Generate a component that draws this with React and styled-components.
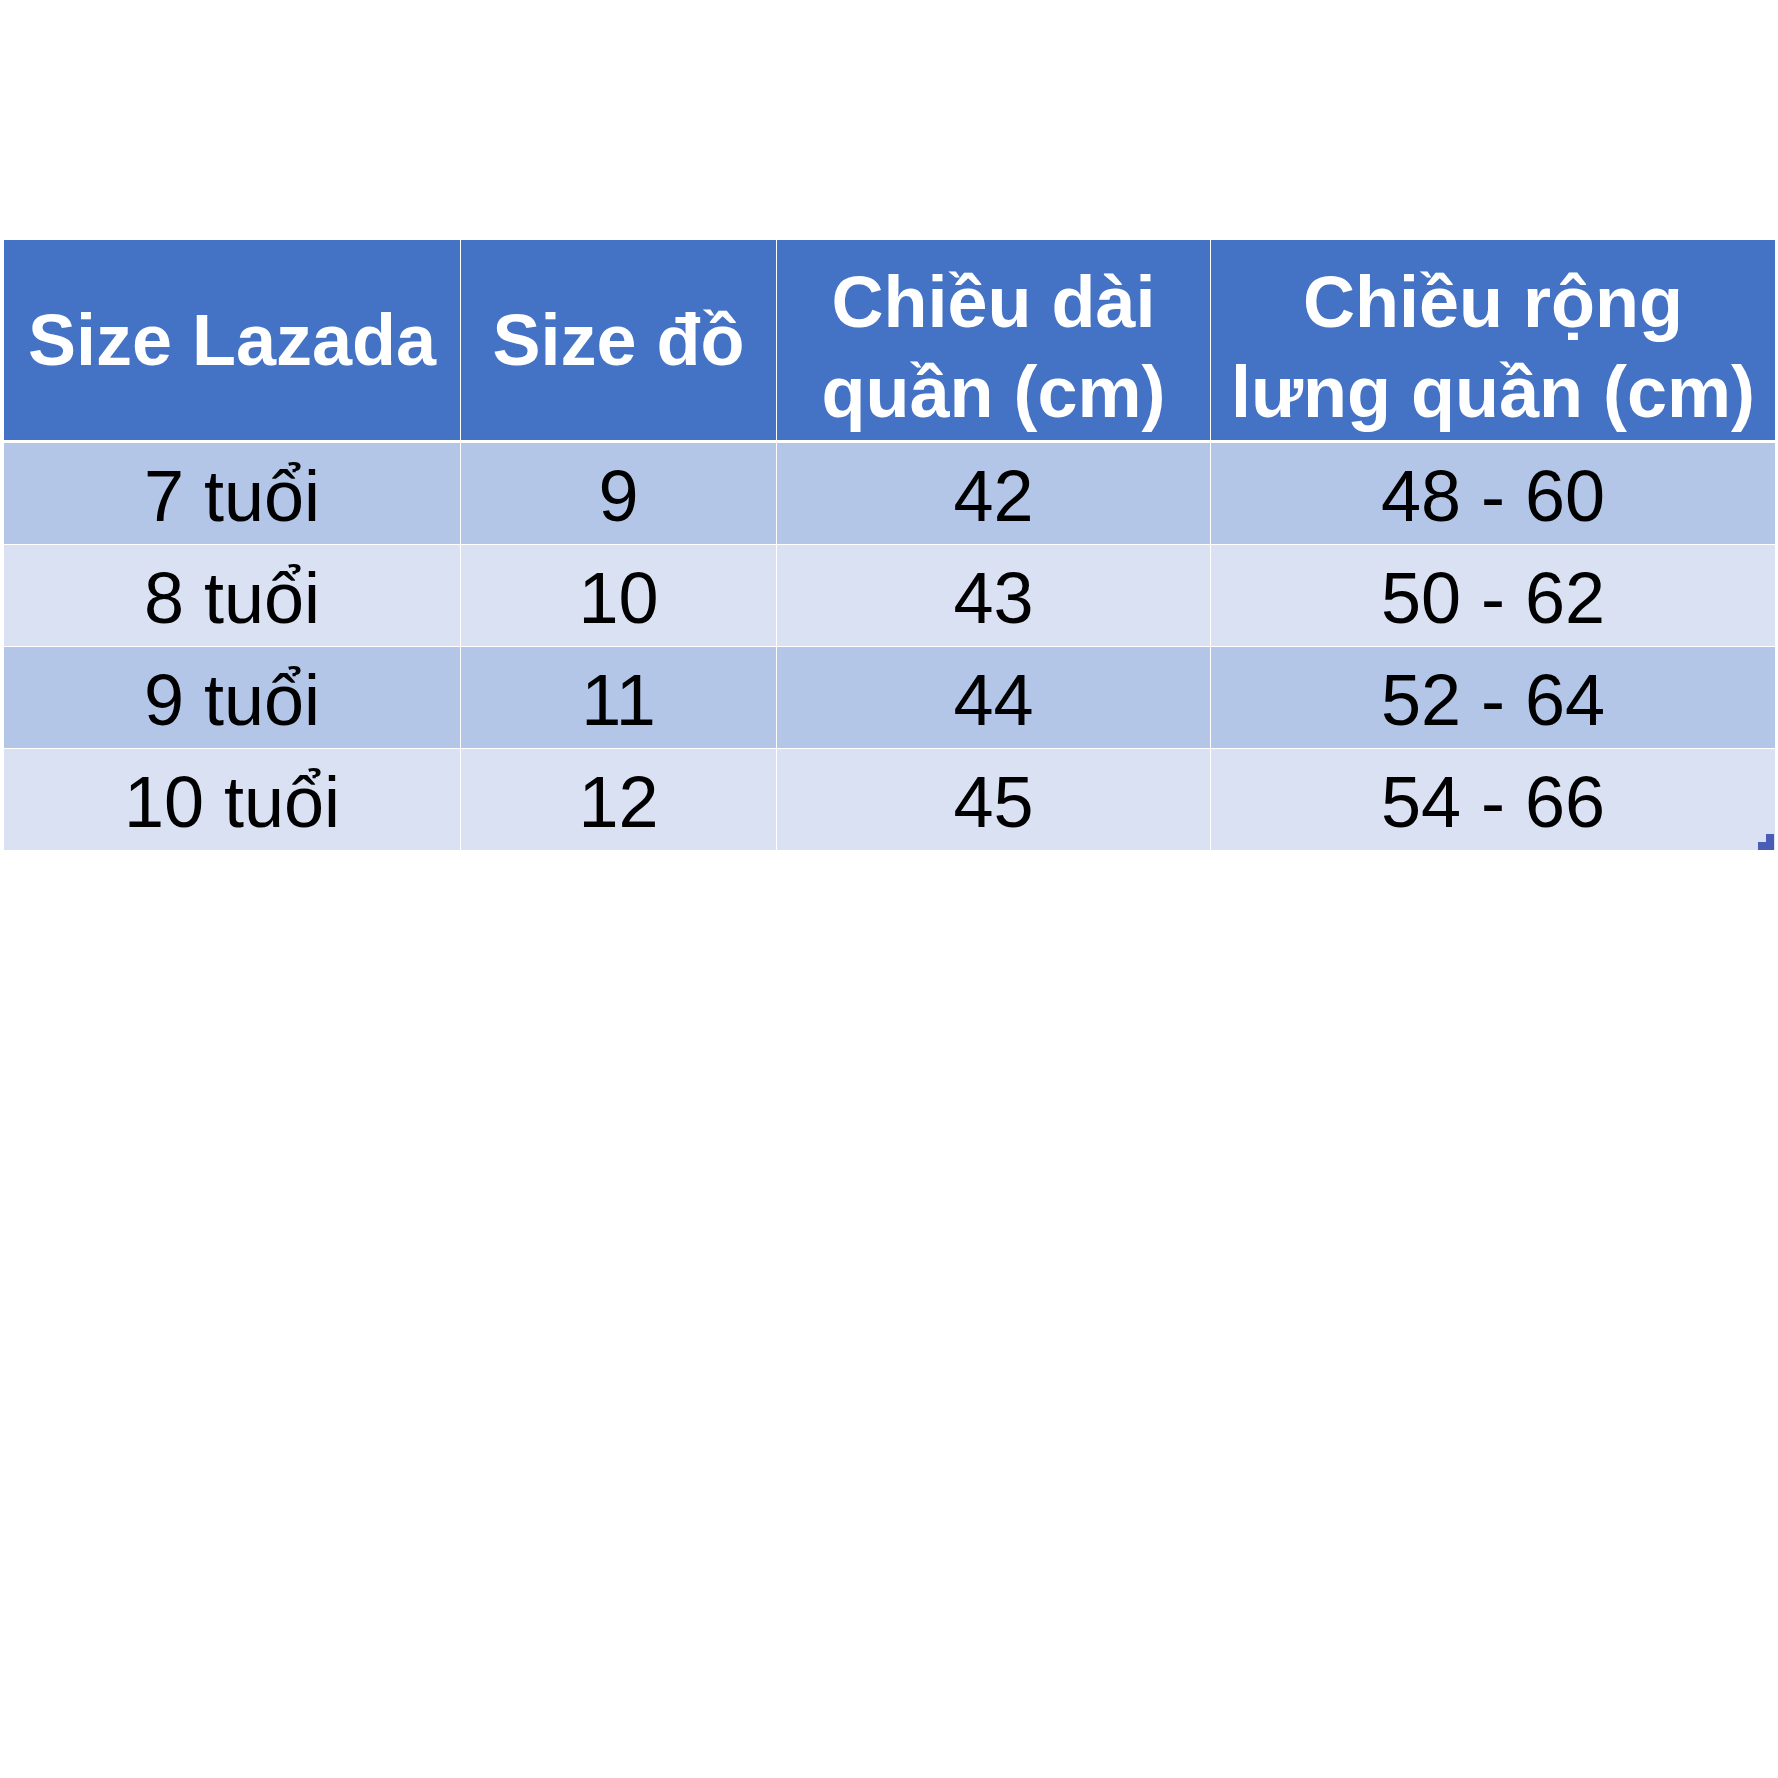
import React from "react";
import styled, { createGlobalStyle } from "styled-components";

const GlobalStyle = createGlobalStyle`
  html, body {
    margin: 0;
    padding: 0;
    background: #ffffff;
  }
  body {
    font-family: "Liberation Sans", Arial, sans-serif;
  }
`;

const Page = styled.div`
  width: 1778px;
  height: 1778px;
  box-sizing: border-box;
  padding: 240px 3px 0 4px;
  background: #ffffff;
`;

const Sheet = styled.div`
  position: relative;
  display: grid;
  grid-template-columns: 456px 315px 433px 564px;
  grid-template-rows: 202px repeat(4, 101px);
  column-gap: 1px;
  row-gap: 1px;
  width: 1771px;
  background: #ffffff;
`;

const HeadCell = styled.div`
  display: flex;
  align-items: center;
  justify-content: center;
  box-sizing: border-box;
  padding-top: ${(p) => (p.twoLine ? "14px" : "0")};
  border-bottom: 2px solid #ffffff;
  background: #4472c4;
  color: #ffffff;
  font-weight: 700;
  font-size: 72px;
  line-height: 90px;
  text-align: center;
  white-space: nowrap;
`;

const Cell = styled.div`
  display: flex;
  align-items: center;
  justify-content: center;
  background: ${(p) => (p.odd ? "#b4c6e7" : "#d9e1f2")};
  color: #000000;
  font-size: 72px;
  line-height: 1;
  white-space: nowrap;
  padding-top: 4px;
  box-sizing: border-box;
`;

const FillHandle = styled.div`
  position: absolute;
  right: 1px;
  bottom: 0;
  width: 16px;
  height: 16px;
  &:before {
    content: "";
    position: absolute;
    right: 0;
    top: 0;
    width: 8px;
    height: 8px;
    background: #4a5db6;
  }
  &:after {
    content: "";
    position: absolute;
    left: 0;
    bottom: 0;
    width: 16px;
    height: 8px;
    background: #4a5db6;
  }
`;

const rows = [
  ["7 tuổi", "9", "42", "48 - 60"],
  ["8 tuổi", "10", "43", "50 - 62"],
  ["9 tuổi", "11", "44", "52 - 64"],
  ["10 tuổi", "12", "45", "54 - 66"],
];

export default function App() {
  return (
    <Page>
      <GlobalStyle />
      <Sheet>
        <HeadCell>Size Lazada</HeadCell>
        <HeadCell>Size đồ</HeadCell>
        <HeadCell twoLine>
          Chiều dài
          <br />
          quần (cm)
        </HeadCell>
        <HeadCell twoLine>
          Chiều rộng
          <br />
          lưng quần (cm)
        </HeadCell>
        {rows.map((row, i) =>
          row.map((value, j) => (
            <Cell key={`${i}-${j}`} odd={i % 2 === 0}>
              {value}
            </Cell>
          ))
        )}
        <FillHandle />
      </Sheet>
    </Page>
  );
}
